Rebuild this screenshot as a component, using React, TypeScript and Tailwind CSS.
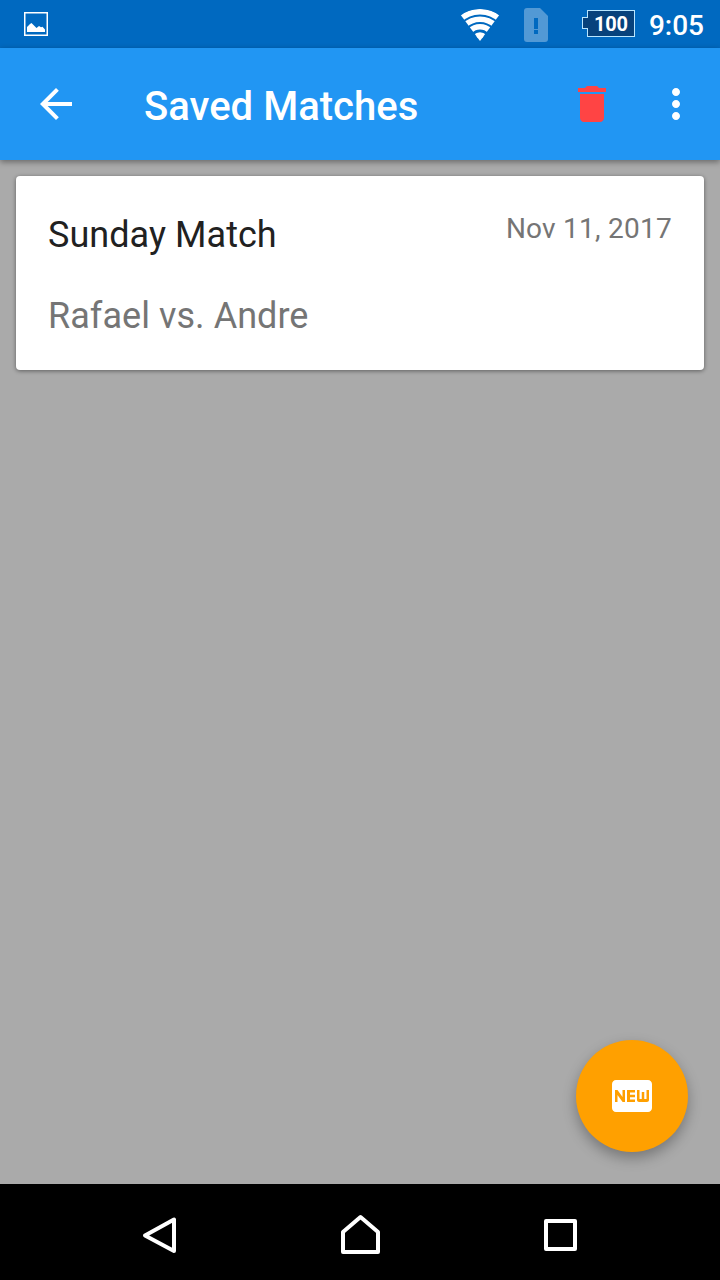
import React from 'react';
import { MdArrowBack, MdDelete, MdFiberNew, MdMoreVert } from 'react-icons/md';

const matches = [
  { title: 'Sunday Match', date: 'Nov 11, 2017', players: 'Rafael vs. Andre' },
];

function StatusBar() {
  return (
    <div className="flex h-12 shrink-0 items-center bg-[#0069c0] pl-6 pr-4 text-white">
      <svg className="h-6 w-6" viewBox="0 0 24 24" fill="none">
        <rect x="0.75" y="0.75" width="22.5" height="22.5" stroke="white" strokeWidth="1.5" />
        <path d="M3 20v-5l3-3 1.5-1 3.5 3.5 1.5 1.5 2.5-2 2 1.2 1.5-.4 2.5 2.7V20z" fill="white" />
      </svg>
      <svg className="mt-0.5 ml-auto h-8 w-10" viewBox="0 0 40 32" fill="none">
        <clipPath id="wedge">
          <path d="M20 32L.5 5.8C11-2 29-2 39.5 5.8z" />
        </clipPath>
        <g clipPath="url(#wedge)" stroke="white" strokeWidth="5.6">
          <circle cx="20" cy="32" r="29.2" />
          <circle cx="20" cy="32" r="21.7" />
          <circle cx="20" cy="32" r="14.2" />
          <circle cx="20" cy="32" r="6" fill="white" />
        </g>
      </svg>
      <svg className="mt-0.5 ml-6 h-[34px] w-6" viewBox="0 0 24 34">
        <path d="M3 0h13l8 8v23a3 3 0 0 1-3 3H3a3 3 0 0 1-3-3V3a3 3 0 0 1 3-3z" fill="#5299d5" />
        <path d="M10 10h4v11h-4zM10 22h4v4h-4z" fill="#0069c0" />
      </svg>
      <div className="-mt-0.5 ml-[34px] flex items-center">
        <div className="z-10 -mr-px h-3 w-1.5 border border-r-0 border-[#b9e6ff] bg-[#07427c]" />
        <div className="flex h-[27px] w-12 items-center justify-center border border-[#b9e6ff] bg-[#07427c] pt-px text-xl leading-none font-bold tracking-[-0.3px]">
          100
        </div>
      </div>
      <span className="mt-[3px] ml-3.5 text-[28px] leading-none font-medium">9:05</span>
    </div>
  );
}

function Toolbar() {
  return (
    <header className="z-10 flex h-28 shrink-0 items-center bg-[#2196f3] pl-8 pr-5 text-white shadow-[0_2px_6px_rgba(0,0,0,0.4)]">
      <button aria-label="Back">
        <MdArrowBack size={48} />
      </button>
      <h1 className="mt-1.5 ml-16 text-[40px] leading-none font-medium tracking-[0.03px]">Saved Matches</h1>
      <button aria-label="Delete" className="ml-auto text-[#ff4444]">
        <MdDelete size={48} />
      </button>
      <button aria-label="More options" className="ml-9">
        <MdMoreVert size={48} />
      </button>
    </header>
  );
}

function NavigationBar() {
  return (
    <nav className="flex h-24 shrink-0 items-center justify-center gap-[152px] bg-black pt-2">
      <svg className="h-12 w-12" viewBox="0 0 48 48" fill="none" stroke="white" strokeWidth="4" strokeLinejoin="round">
        <path d="M38 7.5v31.500L9 23.500z" />
      </svg>
      <svg className="h-12 w-12" viewBox="0 0 48 48" fill="none" stroke="white" strokeWidth="4" strokeLinejoin="round">
        <path d="M7 40V20L24.5 5 42 20v20z" />
      </svg>
      <svg className="h-12 w-12" viewBox="0 0 48 48" fill="none" stroke="white" strokeWidth="4" strokeLinejoin="round">
        <path d="M10 9h29v28H10z" />
      </svg>
    </nav>
  );
}

export default function App() {
  return (
    <div className="flex h-[1280px] w-[720px] flex-col overflow-hidden bg-[#aaaaaa] font-[Roboto,sans-serif]">
      <StatusBar />
      <Toolbar />
      <main className="relative flex-1 p-4">
        {matches.map((match) => (
          <article
            key={match.title}
            className="h-[194px] rounded bg-white px-8 pt-9 shadow-[0_1px_4px_rgba(0,0,0,0.45)]"
          >
            <div className="flex items-start justify-between">
              <h2 className="text-4xl leading-[46px] tracking-[0.05px] text-[#212121]">{match.title}</h2>
              <span className="text-[28px] leading-[34px] tracking-[0.25px] text-[#757575]">{match.date}</span>
            </div>
            <p className="mt-[35px] text-4xl leading-[46px] tracking-[0.05px] text-[#757575]">{match.players}</p>
          </article>
        ))}
        <button
          aria-label="New match"
          className="absolute right-8 bottom-8 flex h-28 w-28 items-center justify-center rounded-full bg-[#ffa000] text-white shadow-[0_6px_14px_rgba(0,0,0,0.3)]"
        >
          <MdFiberNew size={48} />
        </button>
      </main>
      <NavigationBar />
    </div>
  );
}
